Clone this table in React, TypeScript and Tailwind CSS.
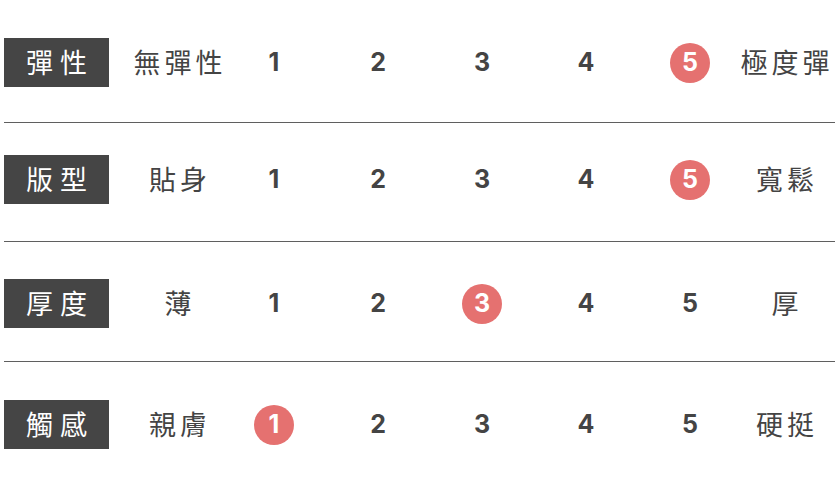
const rows = [
  { name: "彈性", low: "無彈性", high: "極度彈", pick: 5, gap: "mt-[38px] mb-[35px]" },
  { name: "版型", low: "貼身", high: "寬鬆", pick: 5, gap: "mt-[32px] mb-[37px]" },
  { name: "厚度", low: "薄", high: "厚", pick: 3, gap: "mt-[37px] mb-[33px]" },
  { name: "觸感", low: "親膚", high: "硬挺", pick: 1, gap: "mt-[38px]" },
];

const cjk = "font-['Noto_Sans_CJK_TC','Noto_Sans',sans-serif]";
const num = "font-['Inter','Open_Sans',sans-serif]";

function Row({ r }: { r: (typeof rows)[number] }) {
  return (
    <div className={`${r.gap} flex h-[49px] items-center pl-[4px]`}>
      <div
        className={`${cjk} flex h-[49px] w-[105px] items-center justify-center bg-[#454545] pl-[7px] text-[27px] tracking-[7px] text-white`}
      >
        {r.name}
      </div>
      <div
        className={`${cjk} ml-[25px] flex w-[88px] justify-center whitespace-nowrap pl-[4px] text-[27px] tracking-[4px] text-[#444]`}
      >
        {r.low}
      </div>
      {[1, 2, 3, 4, 5].map((n) => (
        <div key={n} className="flex w-[104px] justify-center">
          {n === r.pick ? (
            <span
              className={`${num} flex h-[40px] w-[40px] items-center justify-center rounded-full bg-[#e57170] text-[25px] font-bold text-white`}
            >
              {n}
            </span>
          ) : (
            <span className={`${num} text-[25px] font-bold text-[#444]`}>{n}</span>
          )}
        </div>
      ))}
      <div
        className={`${cjk} flex w-[86px] justify-center whitespace-nowrap pl-[4px] text-[27px] tracking-[4px] text-[#444]`}
      >
        {r.high}
      </div>
    </div>
  );
}

export default function App() {
  return (
    <div className="h-[489px] w-[840px] overflow-hidden bg-white">
      {rows.map((r, i) => (
        <div key={r.name}>
          <Row r={r} />
          {i < rows.length - 1 && <div className="ml-[4px] h-px w-[831px] bg-[#5f5f5f]" />}
        </div>
      ))}
    </div>
  );
}
